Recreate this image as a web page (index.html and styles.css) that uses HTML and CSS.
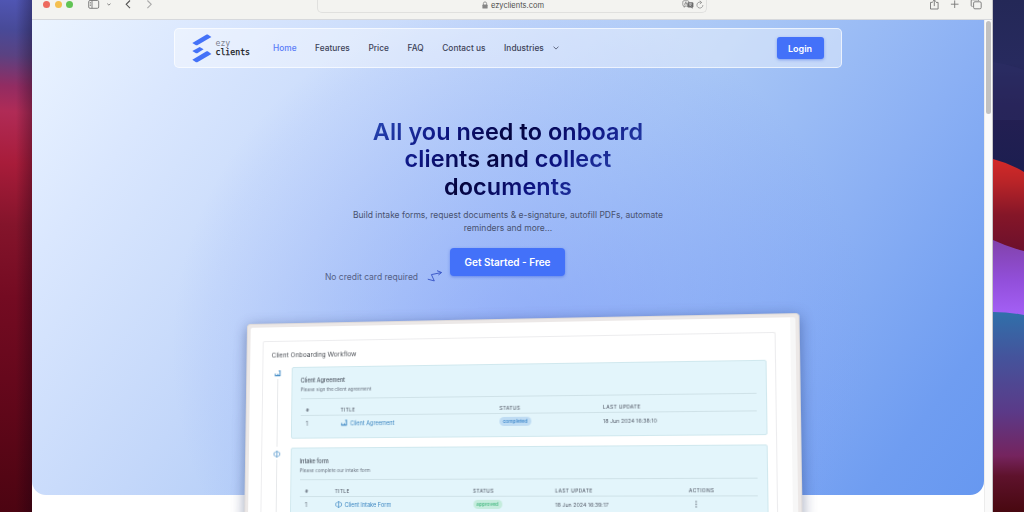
FILE: index.html
```html
<!DOCTYPE html>
<html lang="en">
<head>
    <meta charset="UTF-8">
    <meta name="viewport" content="width=device-width, initial-scale=1.0">
    <title>ezyclients</title>
    <link rel="stylesheet" href="styles.css">
</head>
<body>
    <div class="wallpaper-left"></div>

    <div class="window">
        <div class="toolbar">
            <div class="toolbar-left">
                <span class="light red"></span>
                <span class="light yellow"></span>
                <span class="light green"></span>
                <svg class="tool-icons" width="66" height="12" viewBox="0 0 66 12">
                    <rect x="0.7" y="0.5" width="10" height="7.8" rx="1.3"/>
                    <path d="M4 0.5v7.8M1.8 2.5h1M1.8 4h1M1.8 5.5h1"/>
                    <path d="M19.3 3.7l1.6 1.4 1.6-1.4"/>
                    <path class="big" d="M42 0.5l-3.8 3.8L42 8.1"/>
                    <path class="big dim" d="M59.4 0.5l3.8 3.8-3.8 3.8"/>
                </svg>
            </div>
            <div class="address">
                <div class="address-text">
                    <svg width="6" height="8" viewBox="0 0 6 8">
                        <path d="M1.4 4V2.5a1.6 1.6 0 0 1 3.2 0V4" fill="none" stroke="#858585" stroke-width="0.8"/>
                        <rect x="0.4" y="3.6" width="5.2" height="4" rx="0.7" fill="#858585"/>
                    </svg>
                    <span>ezyclients.com</span>
                </div>
                <svg class="address-icons" width="24" height="12" viewBox="0 0 24 12">
                    <rect x="0.8" y="0.7" width="6" height="5.4" rx="1.2"/>
                    <path d="M2.4 4.8l1.4-3 1.4 3M2.9 3.9h1.8M2 6.1v1.2l1.4-1.2"/>
                    <rect class="solid" x="5.4" y="2.3" width="6" height="5.2" rx="1.2"/>
                    <path class="solid" d="M8.6 7.2h2v1.5z"/>
                    <path class="light-stroke" d="M6.8 3.8h3.2M8.4 3.2v.6M7.3 6.2l2.2-2.2M7.3 4.2l2.2 2"/>
                    <path d="M19.5 2.5a3 3 0 1 0 1.4 2.6M17.8 0.8l1.9 1.7-1.9 1.5"/>
                </svg>
            </div>
            <svg class="tool-icons" width="54" height="12" viewBox="0 0 54 12">
                <path d="M3.6 2.4H1.5v6.6h7.6V2.4H7M5.3 6.1V0M3.5 1.7L5.3-0.1l1.8 1.8"/>
                <path d="M25.7 0.4v7.6M21.9 4.2h7.6"/>
                <rect x="44.6" y="1.8" width="7.6" height="7" rx="1.3"/>
                <path d="M43.6 6.4h-.4a1 1 0 0 1-1-1V0.8a1 1 0 0 1 1-1h5.5a1 1 0 0 1 1 1"/>
            </svg>
        </div>

        <div class="viewport">
            <div class="page">
                <div class="hero">
                    <div class="navbar">
                        <div class="logo">
                            <svg width="20" height="29" viewBox="0 0 20 29">
                                <path d="M0.3 8.9L14.6 0.6h1.2L19.4 2.9 5.3 11.2H4z"/>
                                <path d="M0.3 17L7.7 12.9 11.6 15.3 5.3 19.3H4z"/>
                                <path d="M0.3 25.8L14.6 17.3h1.2L19.4 19.9 5.3 28.2H4z"/>
                            </svg>
                            <div class="logo-text">
                                <span class="ezy">ezy</span>
                                <span class="clients">clients</span>
                            </div>
                        </div>
                        <nav>
                            <a class="active">Home</a>
                            <a>Features</a>
                            <a>Price</a>
                            <a>FAQ</a>
                            <a>Contact us</a>
                            <a>Industries
                                <svg width="6" height="4" viewBox="0 0 6 4"><path d="M0.5 0.6L3 3.1 5.5 0.6" fill="none" stroke="#454c66" stroke-width="0.8"/></svg>
                            </a>
                        </nav>
                        <button class="login">Login</button>
                    </div>

                    <h1>All you need to onboard<br>clients and collect<br>documents</h1>
                    <p class="lead">Build intake forms, request documents &amp; e-signature, autofill PDFs, automate<br>reminders and more...</p>

                    <div class="cta">
                        <span class="note">No credit card required</span>
                        <svg class="arrow" width="16" height="12" viewBox="0 0 16 12">
                            <path d="M0.8 9.2L7.3 10.9 4.4 4.6 14.2 2.6M10 0.7L14.6 2.5 11.4 5"/>
                        </svg>
                        <button class="start">Get Started - Free</button>
                    </div>
                </div>

                <div class="device">
                    <div class="screen">
                        <div class="workflow">
                            <div class="workflow-title">Client Onboarding Workflow</div>
                            <div class="step">
                                <div class="rail">
                                    <svg width="7" height="7" viewBox="0 0 7 7"><path class="sign" d="M0.8 3.6v2h2.8V3.8M2.2 5.6h4M5.8 5.9V0.9H4.5"/></svg>
                                    <span class="line"></span>
                                </div>
                                <div class="card">
                                    <div class="card-title">Client Agreement</div>
                                    <div class="card-text">Please sign the client agreement</div>
                                    <div class="row head agreement">
                                        <span>#</span><span>TITLE</span><span>STATUS</span><span>LAST UPDATE</span>
                                    </div>
                                    <div class="row agreement">
                                        <span>1</span>
                                        <span class="link">
                                            <svg width="7" height="7" viewBox="0 0 7 7"><path class="sign" d="M0.8 3.6v2h2.8V3.8M2.2 5.6h4M5.8 5.9V0.9H4.5"/></svg>
                                            Client Agreement
                                        </span>
                                        <span><b class="pill completed">completed</b></span>
                                        <span class="date">18 Jun 2024 16:38:10</span>
                                    </div>
                                </div>
                            </div>
                            <div class="step">
                                <div class="rail">
                                    <svg width="7" height="7" viewBox="0 0 7 7"><path class="form" d="M3.5 0.3v6.4M2.6 0.4h1.8M2.6 6.6h1.8M2.6 1.7H1.5a1 1 0 0 0-1 1v1.6a1 1 0 0 0 1 1h1.1M4.4 1.7h1.1a1 1 0 0 1 1 1v1.6a1 1 0 0 1-1 1H4.4"/></svg>
                                    <span class="line"></span>
                                </div>
                                <div class="card">
                                    <div class="card-title">Intake form</div>
                                    <div class="card-text">Please complete our intake form</div>
                                    <div class="row head intake">
                                        <span>#</span><span>TITLE</span><span>STATUS</span><span>LAST UPDATE</span><span>ACTIONS</span>
                                    </div>
                                    <div class="row intake">
                                        <span>1</span>
                                        <span class="link">
                                            <svg width="7" height="7" viewBox="0 0 7 7"><path class="form" d="M3.5 0.3v6.4M2.6 0.4h1.8M2.6 6.6h1.8M2.6 1.7H1.5a1 1 0 0 0-1 1v1.6a1 1 0 0 0 1 1h1.1M4.4 1.7h1.1a1 1 0 0 1 1 1v1.6a1 1 0 0 1-1 1H4.4"/></svg>
                                            Client Intake Form
                                        </span>
                                        <span><b class="pill approved">approved</b></span>
                                        <span class="date">18 Jun 2024 16:39:17</span>
                                        <span class="dots">
                                            <svg width="2" height="7" viewBox="0 0 2 7"><circle cx="1" cy="1" r="0.65"/><circle cx="1" cy="3.5" r="0.65"/><circle cx="1" cy="6" r="0.65"/></svg>
                                        </span>
                                    </div>
                                </div>
                            </div>
                        </div>
                    </div>
                </div>
            </div>
            <div class="scrollbar"><div class="thumb"></div></div>
        </div>
    </div>

    <svg class="wallpaper-right" width="31" height="512" viewBox="0 0 31 512">
        <defs>
            <linearGradient id="navy" x1="0" y1="0" x2="0" y2="1">
                <stop offset="0" stop-color="#242857"/>
                <stop offset="0.35" stop-color="#272a5e"/>
                <stop offset="0.6" stop-color="#241f52"/>
                <stop offset="1" stop-color="#1b1e50"/>
            </linearGradient>
            <linearGradient id="red" x1="0" y1="0" x2="0" y2="1">
                <stop offset="0" stop-color="#d42a28"/>
                <stop offset="0.25" stop-color="#b92428"/>
                <stop offset="0.6" stop-color="#851628"/>
                <stop offset="1" stop-color="#6b102c"/>
            </linearGradient>
            <linearGradient id="purple" x1="0" y1="0" x2="0" y2="1">
                <stop offset="0" stop-color="#8142aa"/>
                <stop offset="0.5" stop-color="#924fda"/>
                <stop offset="1" stop-color="#a763fb"/>
            </linearGradient>
            <linearGradient id="bottom" x1="0" y1="0" x2="0" y2="1">
                <stop offset="0" stop-color="#3070aa"/>
                <stop offset="0.22" stop-color="#44549c"/>
                <stop offset="0.5" stop-color="#5b3a88"/>
                <stop offset="0.72" stop-color="#75245e"/>
                <stop offset="0.82" stop-color="#5e122c"/>
                <stop offset="1" stop-color="#480810"/>
            </linearGradient>
        </defs>
        <rect width="31" height="180" fill="url(#navy)"/>
        <path d="M0 62q16 2 31 8v50H0z" fill="#30306a" opacity="0.35"/>
        <path d="M0 159q16 4 31 13v80H0z" fill="url(#red)"/>
        <path d="M0 240q15 7 31 11v70H0z" fill="url(#purple)"/>
        <path d="M0 312q16 0 31 3v197H0z" fill="url(#bottom)"/>
    </svg>
</body>
</html>
```
FILE: styles.css
```css
* {
    box-sizing: border-box;
}
body {
    margin: 0;
    width: 1024px;
    height: 512px;
    overflow: hidden;
    display: flex;
    background: #1b1b40;
    font-family: Inter, "Liberation Sans", sans-serif;
}
svg {
    display: block;
    flex: none;
}
button {
    border: none;
    padding: 0;
    font-family: inherit;
    color: white;
    background: #4371f9;
    cursor: pointer;
}

/* Desktop behind the window */
.wallpaper-left {
    width: 32px;
    background:
        linear-gradient(90deg, rgba(0, 0, 0, 0) 50%, rgba(10, 0, 15, 0.3)),
        linear-gradient(184deg, #5056b4 0%, #484a98 6%, #5a4282 11%, #922c62 17%, #b02b56 22%, #a81c3a 32%, #84142b 44%, #740b22 58%, #66081c 74%, #4c0411 100%);
}
.wallpaper-right {
    width: 31px;
}

/* Browser window */
.window {
    width: 961px;
    height: 512px;
    background: white;
    display: flex;
    flex-direction: column;
    border-right: 1px solid #c5c5c8;
}
.toolbar {
    height: 20px;
    flex: none;
    display: flex;
    align-items: flex-start;
    padding: 0 9px 0 11px;
    background: #f3f3f0;
    border-bottom: 1px solid #d6d8dc;
}
.toolbar-left {
    width: 274px;
    display: flex;
    gap: 4.5px;
}
.light {
    width: 7px;
    height: 7px;
    margin-top: 1px;
    border-radius: 50%;
}
.red {
    background: #ed6a5e;
}
.yellow {
    background: #f4bf4f;
}
.green {
    background: #61c454;
}
.tool-icons {
    fill: none;
    stroke: #767676;
    stroke-width: 0.9;
}
.toolbar-left .tool-icons {
    margin-left: 10px;
}
.tool-icons .big {
    stroke: #555;
    stroke-width: 1.1;
}
.tool-icons .dim {
    stroke: #aaa;
}
.address {
    width: 390px;
    height: 13px;
    margin-right: auto;
    display: flex;
    align-items: flex-start;
    border: 1px solid #e0e0de;
    border-top: none;
    border-radius: 0 0 5px 5px;
}
.address-text {
    flex: 1;
    display: flex;
    justify-content: center;
    align-items: center;
    gap: 3px;
    height: 10px;
    padding-left: 26px;
    font-size: 7.5px;
    color: #4c4c4c;
}
.address-icons {
    fill: none;
    stroke: #7c7c7c;
    stroke-width: 0.7;
}
.address-icons .solid {
    fill: #6c6c6c;
    stroke: none;
}
.address-icons .light-stroke {
    stroke: #eee;
    stroke-width: 0.5;
}
.viewport {
    flex: 1;
    min-height: 0;
    display: flex;
}
.page {
    width: 952px;
    height: 492px;
    flex: none;
    overflow: hidden;
}
.scrollbar {
    flex: 1;
    padding: 1px 1px 0 1px;
    background: #fafafa;
    border-left: 1px solid #ececec;
}
.thumb {
    width: 5px;
    height: 93px;
    border-radius: 3px;
    background: #c1c1c1;
}

/* Hero */
.hero {
    height: 475px;
    display: flex;
    flex-direction: column;
    align-items: center;
    border-radius: 0 0 14px 14px;
    background:
        radial-gradient(circle 350px at 490px 330px, rgba(112, 138, 252, 0.42), rgba(120, 150, 250, 0.25) 50%, rgba(130, 160, 250, 0.08) 90%, rgba(130, 165, 250, 0)),
        linear-gradient(127deg, #ebf4ff 0%, #dae7fe 14%, #c3d7fa 34%, #a9c7f6 54%, #8bb0f4 74%, #6f9df1 91%, #6798f0 100%);
}
.navbar {
    width: 668px;
    height: 40px;
    margin-top: 8px;
    padding: 0 17.5px 0 16.5px;
    display: flex;
    align-items: center;
    border: 1.5px solid rgba(255, 255, 255, 0.65);
    border-radius: 5px;
    background: rgba(255, 255, 255, 0.4);
}
.logo {
    display: flex;
    gap: 4px;
    width: 81.5px;
    fill: #4472f8;
}
.logo-text {
    display: flex;
    flex-direction: column;
    padding-top: 5px;
    font-family: "DejaVu Sans Mono", monospace;
    font-size: 8.2px;
    line-height: 9px;
}
.ezy {
    color: #7c818d;
}
.clients {
    color: #15161c;
    -webkit-text-stroke: 0.25px #15161c;
}
nav {
    flex: 1;
    display: flex;
    gap: 18.5px;
    font-size: 8.3px;
    font-weight: 500;
    letter-spacing: 0.04px;
    color: #3c4258;
}
nav a {
    display: flex;
    align-items: center;
    gap: 9px;
}
nav .active {
    color: #5a7cf8;
}
.login {
    width: 47px;
    height: 22px;
    border-radius: 3px;
    font-size: 9px;
    font-weight: 600;
    box-shadow: 0 1px 3px rgba(60, 100, 230, 0.5);
}
h1 {
    margin: 49.5px 0 0;
    padding: 0 30px;
    font-size: 23.4px;
    font-weight: 600;
    line-height: 27.7px;
    letter-spacing: 0.1px;
    text-align: center;
    color: transparent;
    background: linear-gradient(135deg, #2c50bc 4%, #0e1684 28%, #04043c 45%, #0c1280 62%, #2e4cb4 86%);
    -webkit-background-clip: text;
    background-clip: text;
}
.lead {
    margin: 8.4px 0 0;
    font-size: 8.5px;
    line-height: 12.5px;
    letter-spacing: 0.02px;
    text-align: center;
    color: #48526f;
}
.cta {
    display: flex;
    align-items: flex-end;
    height: 28px;
    margin-top: 13.8px;
    padding-right: 126px;
}
.note {
    font-size: 8.5px;
    line-height: 10px;
    margin-bottom: -6px;
    color: #536086;
}
.arrow {
    margin: 0 7px -6px 9px;
    fill: none;
    stroke: #3350c4;
    stroke-width: 0.9;
    stroke-linejoin: round;
}
.start {
    width: 115px;
    height: 28px;
    border-radius: 4px;
    font-size: 10px;
    font-weight: 600;
    box-shadow: 0 1px 3px rgba(50, 90, 220, 0.5);
}

/* Tilted app preview. It starts inside the hero and runs past its lower edge. */
.device {
    position: relative;
    width: 556px;
    height: 230px;
    margin: -171px 0 0 215px;
    padding: 2.5px 3px 0;
    border: 1px solid #dedada;
    border-bottom: none;
    border-radius: 4px 4px 0 0;
    background: #ece8e7;
    box-shadow: 0 3px 14px rgba(20, 35, 90, 0.42);
    transform-origin: 0 0;
    transform: matrix3d(0.93878, -0.018691, 0, -0.00009942, -0.013923, 0.969458, 0, -0.00005164, 0, 0, 1, 0, 0, 0, 0, 1);
}
.screen {
    height: 100%;
    padding: 14.5px 14.5px 0 13px;
    border-right: 5px solid #f7f7f7;
    border-radius: 2px 2px 0 0;
    background: white;
}
.workflow {
    height: 100%;
    padding: 8px 8px 0 8.5px;
    border: 1px solid #ececee;
    border-bottom: none;
    border-radius: 2px;
    font-size: 5.6px;
    color: #5c6370;
}
.workflow-title {
    height: 18px;
    font-size: 6.7px;
    line-height: 12px;
    color: #4d5157;
}
.step {
    display: flex;
    gap: 10px;
    margin-bottom: 9px;
}
.rail {
    width: 11px;
    padding: 2.5px 0 0 3px;
    display: flex;
    flex-direction: column;
}
.rail .line {
    flex: 1;
    width: 1px;
    margin: 2px 0 -8px 3px;
    background: #e6e8ea;
}
.sign, .form {
    fill: none;
    stroke: #4a90c8;
    stroke-width: 1.1;
}
.form {
    stroke-width: 0.75;
}
.card {
    flex: 1;
    height: 73px;
    padding: 8.5px 9px 0;
    border: 1px solid #d0e8ee;
    border-radius: 2px;
    background: #e3f5fb;
}
.card-title {
    font-weight: 500;
    line-height: 8px;
    color: #4d5561;
}
.card-text {
    height: 15px;
    padding-top: 1px;
    font-size: 4.8px;
    line-height: 8px;
    color: #6d7683;
    border-bottom: 1px solid #cfe2e8;
}
.row {
    display: grid;
    align-items: center;
    height: 15.5px;
    padding-left: 6px;
    white-space: nowrap;
}
.row.head {
    height: 17.5px;
    padding-top: 5.5px;
    font-size: 4.8px;
    font-weight: 500;
    letter-spacing: 0.42px;
    border-bottom: 1px solid #cfe2e8;
}
.agreement {
    grid-template-columns: 36px 162.5px 103px 1fr;
}
.intake {
    grid-template-columns: 31px 141px 82px 130.5px 1fr;
}
.link {
    display: flex;
    align-items: center;
    gap: 3px;
    color: #3d87c2;
}
.date {
    font-size: 5.3px;
}
.pill {
    display: inline-block;
    padding: 0 3.5px;
    border-radius: 5px;
    font-size: 4.9px;
    font-weight: 500;
    line-height: 9px;
}
.completed {
    color: #3b87cb;
    background: #bfdcf3;
}
.approved {
    color: #45b881;
    background: #c5ecdd;
}
.dots {
    padding-left: 6px;
    fill: #5c6370;
}
```
